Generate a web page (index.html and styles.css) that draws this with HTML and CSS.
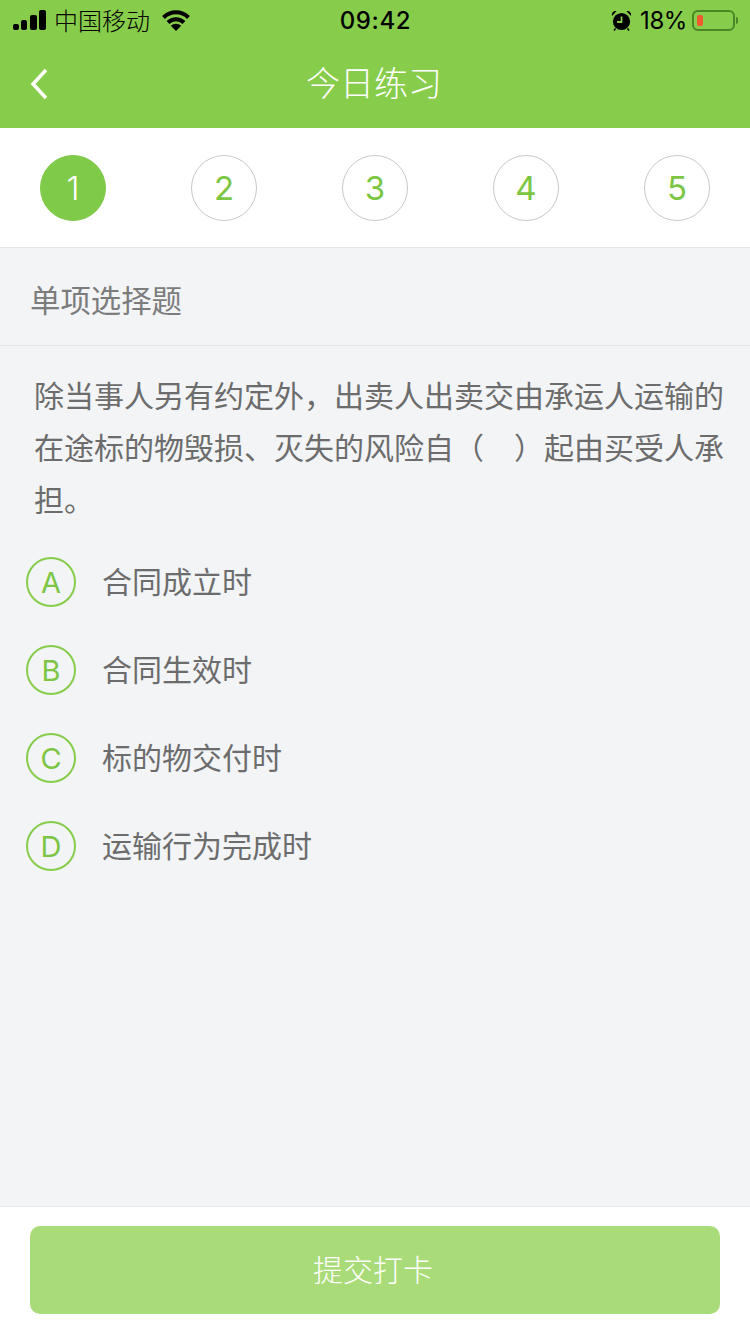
FILE: index.html
```html
<!DOCTYPE html>
<html lang="zh-CN">
<head>
<meta charset="utf-8">
<title>今日练习</title>
<link rel="stylesheet" href="styles.css">
</head>
<body>
<div class="page">
  <header class="top">
    <div class="status">
      <div class="status-left">
        <svg class="signal" width="34" height="20" viewBox="0 0 34 20"><rect x="0" y="14" width="6" height="6" rx="2"/><rect x="8" y="10" width="6" height="10" rx="2"/><rect x="17" y="5" width="7" height="15" rx="2"/><rect x="26" y="0" width="7" height="20" rx="2"/></svg>
        <span class="carrier">中国移动</span>
        <svg class="wifi" width="28" height="21" viewBox="0 0 28 21"><path class="wifi-arc" d="M1.500 7.500C8.500 .5 19.500 .5 26.500 7.500"/><path class="wifi-arc" d="M6 12.500C10.500 8 17.500 8 22 12.500"/><path d="M14 21L8.800 15.800C11.700 13 16.300 13 19.200 15.800z"/></svg>
      </div>
      <div class="time">09:42</div>
      <div class="status-right">
        <svg class="alarm" width="21" height="21" viewBox="0 0 21 21"><circle cx="10.500" cy="11.500" r="8.600"/><path d="M1 6C.3 3 2.500.6 5.500 1.200zM20 6c.7-3-1.500-5.400-4.500-4.800z"/><path d="M4.500 18.500l-1.500 2M16.500 18.500l1.500 2" stroke="#000" stroke-width="1.500"/><path class="alarm-hand" d="M10.500 6.500v5.500H6"/></svg>
        <span class="percent">18%</span>
        <div class="battery"><div class="battery-fill"></div></div>
        <div class="battery-nib"></div>
      </div>
    </div>
    <div class="nav">
      <svg class="back" width="18" height="32" viewBox="0 0 18 32"><path d="M16 2L3 16l13 14"/></svg>
      <h1 class="title">今日练习</h1>
    </div>
  </header>

  <nav class="steps">
    <div class="step step-on">1</div>
    <div class="step">2</div>
    <div class="step">3</div>
    <div class="step">4</div>
    <div class="step">5</div>
  </nav>

  <main class="body">
    <div class="kind">单项选择题</div>
    <p class="question">除当事人另有约定外，出卖人出卖交由承运人运输的在途标的物毁损、灭失的风险自（　）起由买受人承担。</p>
    <ul class="options">
      <li class="option"><span class="letter">A</span><span class="option-text">合同成立时</span></li>
      <li class="option"><span class="letter">B</span><span class="option-text">合同生效时</span></li>
      <li class="option"><span class="letter">C</span><span class="option-text">标的物交付时</span></li>
      <li class="option"><span class="letter">D</span><span class="option-text">运输行为完成时</span></li>
    </ul>
  </main>

  <footer class="foot">
    <button class="submit" type="button">提交打卡</button>
  </footer>
</div>
</body>
</html>
```
FILE: styles.css
```css
* { box-sizing: border-box; }
html, body { margin: 0; padding: 0; }
body {
  width: 750px;
  height: 1334px;
  overflow: hidden;
  font-family: "Noto Sans CJK SC", "Noto Sans", sans-serif;
  background: #f2f4f6;
}
.page { display: flex; flex-direction: column; height: 1334px; }

.top { background: #87cd4b; height: 128px; flex: none; }
.status {
  height: 40px;
  display: grid;
  grid-template-columns: 1fr auto 1fr;
  align-items: center;
  padding: 0 13px;
  color: #000;
}
.status-left { display: flex; align-items: center; }
.signal { fill: #000; }
.carrier { font-size: 24px; line-height: 40px; margin-left: 7px; font-weight: 300; }
.wifi { fill: #000; margin-left: 12px; }
.wifi-arc { fill: none; stroke: #000; stroke-width: 4; }
.time { font-family: Inter, Roboto, sans-serif; font-size: 24px; font-weight: 500; letter-spacing: .6px; margin-left: 1px; }
.status-right { display: flex; align-items: center; justify-content: flex-end; }
.alarm { fill: #000; }
.alarm-hand { fill: none; stroke: #87cd4b; stroke-width: 1.800; }
.percent { font-family: Inter, Roboto, sans-serif; font-size: 24px; font-weight: 400; margin-left: 8px; letter-spacing: -.4px; }
.battery {
  width: 43px;
  height: 21px;
  margin-left: 5px;
  border: 2px solid #4c8528;
  border-radius: 6px;
  padding: 3px;
}
.battery-fill { width: 6px; height: 100%; background: #f0592f; border-radius: 2px; }
.battery-nib { width: 2px; height: 7px; margin-left: 1px; margin-right: -1px; background: #4c8528; border-radius: 0 2px 2px 0; }

.nav { position: relative; height: 88px; display: flex; align-items: center; justify-content: center; }
.back { position: absolute; left: 30px; top: 28px; fill: none; stroke: #fff; stroke-width: 3.500; }
.title { margin: -4px 0 0 -2px; color: #fff; font-size: 34px; font-weight: 300; line-height: 88px; }

.steps {
  flex: none;
  height: 120px;
  background: #fff;
  border-bottom: 1px solid #e6e6e6;
  padding: 27px 40px 0;
  display: flex;
  justify-content: space-between;
  align-items: flex-start;
}
.step {
  width: 66px;
  height: 66px;
  border-radius: 50%;
  border: 1px solid #c8c8c8;
  color: #7cc644;
  font-family: Inter, Roboto, sans-serif;
  font-size: 33px;
  font-weight: 400;
  display: flex;
  align-items: center;
  justify-content: center;
}
.step-on { background: #80ca4a; border-color: #80ca4a; color: #fff; font-weight: 300; }

.body { flex: 1; }
.kind {
  height: 98px;
  border-bottom: 1px solid #e6e7e9;
  padding-left: 30px;
  color: #7c7c7c;
  font-size: 30.400px;
  font-weight: 400;
  line-height: 102px;
}
.question {
  margin: 0;
  padding: 22px 0 0 34px;
  width: 727px;
  color: #6c6c6c;
  font-size: 30px;
  font-weight: 400;
  line-height: 52px;
}
.options { list-style: none; margin: 14px 0 0; padding: 0 0 0 26px; }
.option { height: 88px; display: flex; align-items: center; }
.letter {
  width: 50px;
  height: 50px;
  border-radius: 50%;
  border: 2px solid #87cd4b;
  color: #7cc644;
  font-family: Inter, Roboto, sans-serif;
  font-size: 29px;
  font-weight: 400;
  padding-top: 1px;
  display: flex;
  align-items: center;
  justify-content: center;
}
.option-text { margin: -4px 0 0 26px; color: #6c6c6c; font-size: 30px; font-weight: 400; }

.foot {
  flex: none;
  height: 128px;
  background: #fff;
  border-top: 1px solid #e6e7e9;
  padding: 19px 30px 0;
}
.submit {
  display: block;
  width: 690px;
  height: 88px;
  border: 0;
  border-radius: 10px;
  background: #a9dc78;
  color: #fff;
  font-family: inherit;
  font-size: 30px;
  font-weight: 300;
  padding: 0 4px 4px 0;
}
```
